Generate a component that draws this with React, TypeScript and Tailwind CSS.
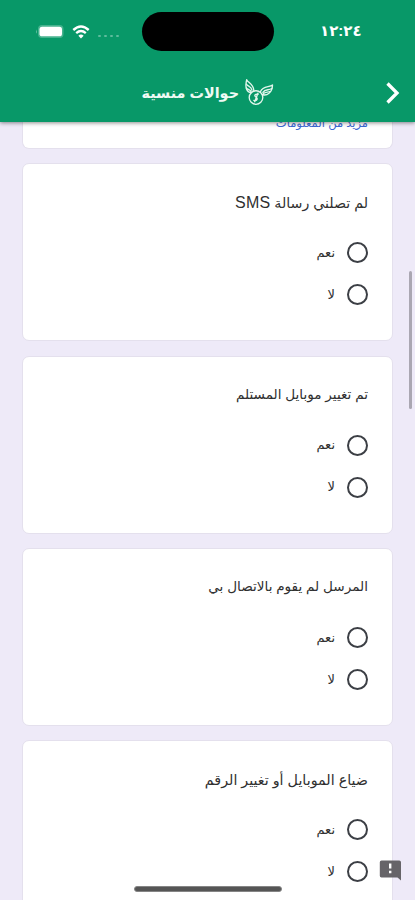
import type { ReactNode } from 'react'
import { clsx } from 'clsx'

interface Question {
  id: string
  title: ReactNode
  titleClass: string
}

const QUESTIONS: Question[] = [
  {
    id: 'no-sms',
    title: (
      <>
        لم تصلني رسالة <span className="text-[16px] tracking-[0.2px]">SMS</span>
      </>
    ),
    titleClass: 'text-[14.2px]',
  },
  { id: 'phone-changed', title: 'تم تغيير موبايل المستلم', titleClass: 'text-[13.6px]' },
  { id: 'no-contact', title: 'المرسل لم يقوم بالاتصال بي', titleClass: 'text-[13.6px]' },
  { id: 'phone-lost', title: 'ضياع الموبايل أو تغيير الرقم', titleClass: 'text-[14.3px]' },
]

export default function App() {
  return (
    <div
      dir="rtl"
      className="relative flex h-[900px] w-[415px] flex-col overflow-hidden bg-[#eeeaf8] font-['Liberation_Sans','DejaVu_Sans',sans-serif]"
    >
      <Header />
      <main className="flex min-h-0 flex-1 flex-col gap-[14.3px] overflow-hidden px-[22px]">
        <section className="h-[27px] shrink-0 rounded-b-[7px] border border-t-0 border-[#e4e0ed] bg-white px-[24px]">
          <p className="-mt-[9px] text-[11.5px] leading-[20px] whitespace-nowrap text-[#3b68d4]">
            مزيد من المعلومات
          </p>
        </section>
        {QUESTIONS.map(({ id, title, titleClass }) => (
          <QuestionCard key={id} title={title} titleClass={titleClass} />
        ))}
      </main>

      {/* Overlays: scroll thumb, feedback shortcut, home indicator */}
      <div className="absolute top-[271px] left-[409px] h-[138px] w-[3px] rounded-full bg-[#aaa7b2]" />
      <FeedbackIcon />
      <div className="absolute top-[886px] left-[134px] h-[6px] w-[148px] rounded-full border border-[#858585] bg-[#555]" />
    </div>
  )
}

function Header() {
  return (
    <header
      dir="ltr"
      className="relative z-10 flex h-[122px] shrink-0 flex-col bg-[#089868] text-white shadow-[0_1px_4px_rgba(0,0,0,0.45)]"
    >
      <div className="flex h-[63px] items-center">
        <div className="flex w-[142px] items-center pl-[35px]">
          <BatteryIcon />
          <WifiIcon />
          <div className="mt-[9px] ml-[8px] flex gap-[3.5px]">
            {[0, 1, 2, 3].map((dot) => (
              <span key={dot} className="size-[2.5px] rounded-full bg-white/35" />
            ))}
          </div>
        </div>
        <div className="h-[39px] w-[132px] rounded-full bg-black" />
        <time className="mb-[2px] ml-[46px] text-[15px] leading-[20px] font-bold whitespace-nowrap">
          ١٢:٢٤
        </time>
      </div>
      <div className="flex h-[59px] items-center pl-[141px]">
        <h1
          dir="rtl"
          className="w-[98px] text-[14.4px] leading-[24px] font-bold whitespace-nowrap text-[#effaf4]"
        >
          حوالات منسية
        </h1>
        <WingedCoinIcon />
        <svg className="mr-[14px] ml-auto" width="17" height="24" viewBox="0 0 17 24" fill="none">
          <path d="M3.500 2.500 13 12 3.500 21.500" stroke="currentColor" strokeWidth="3.300" />
        </svg>
      </div>
    </header>
  )
}

function QuestionCard({ title, titleClass }: Omit<Question, 'id'>) {
  return (
    <section className="flex h-[178px] shrink-0 flex-col rounded-[7px] border border-[#e4e0ed] bg-white pt-[26.500px] pr-[24px]">
      <h2
        className={clsx('h-[24px] leading-[24px] font-normal whitespace-nowrap text-[#303030]', titleClass)}
      >
        {title}
      </h2>
      <div className="mt-[27.500px] flex flex-col gap-[21px]">
        <Option label="نعم" />
        <Option label="لا" />
      </div>
    </section>
  )
}

function Option({ label }: { label: string }) {
  return (
    <label className="flex h-[21px] items-center gap-[12px] text-[13px] text-[#303030]">
      <span className="size-[21px] rounded-full border-2 border-[#3c3f45]" />
      <span>{label}</span>
    </label>
  )
}

function BatteryIcon() {
  return (
    <svg width="29" height="15" viewBox="0 0 29 15">
      <rect x="3" y="1" width="25.5" height="13" rx="4" fill="#fff" opacity=".25" />
      <path d="M2 5.2Q.3 7.5 2 9.8Z" fill="#fff" opacity=".4" />
      <rect x="4.5" y="2.7" width="22.5" height="9.6" rx="2.6" fill="#fff" />
    </svg>
  )
}

function WifiIcon() {
  return (
    <svg className="ml-[8px]" width="18" height="14" viewBox="0 0 18 14" fill="none">
      <path d="M1.3 5Q9-2 16.7 5" stroke="#fff" strokeWidth="2.4" />
      <path d="M4.2 8.2Q9 3.9 13.8 8.2" stroke="#fff" strokeWidth="2.3" />
      <path d="M6.4 10.7Q9 8.5 11.6 10.7L9 13.5Z" fill="#fff" />
    </svg>
  )
}

function WingedCoinIcon() {
  return (
    <svg
      className="-mt-[2px] ml-[5px]"
      width="30"
      height="28"
      viewBox="0 0 30 28"
      fill="none"
      stroke="#e3f6ec"
      strokeWidth="1.35"
      strokeLinecap="round"
      strokeLinejoin="round"
    >
      <circle cx="12" cy="19.5" r="6.8" />
      <path d="M7.3 14.8C2.700 14.300.700 9.800 2.700 1.700c1.200 3.100 6.600 4 7.200 10.900" />
      <path d="M2.500 6.200c1.300 2.500 4.600 1.500 5.500 6M2.300 10c1.400 2 4 1 5 4.300" />
      <path d="M18.400 16.500c4.300 1.700 10-1.800 10.100-9.500-3 2.800-9.600.2-12.100 6.800" />
      <path d="M27.800 10.500c-3 2-6.800.3-8.900 3.800M26 13.500c-2.400 1-4.900.1-6.600 2.200" />
      <path d="M14.200 16.200c-3-.6-4.400 1.500-2.400 2.800 2.700 1.400 1 4.300-2 3.400M13.900 15.200l-3.200 8.500" />
    </svg>
  )
}

function FeedbackIcon() {
  return (
    <svg className="absolute top-[860px] left-[379px]" width="22" height="21" viewBox="0 0 22 21">
      <path d="M2.500.5h17.700Q22 .5 22 2.300v18.200l-3.500-3h-16Q.8 17.500.8 15.700V2.300Q.8.500 2.500.500Z" fill="#666468" />
      <path d="M10 3.500h2.400v5H10zM10 10.700h2.400v2.600H10z" fill="#fff" />
    </svg>
  )
}
